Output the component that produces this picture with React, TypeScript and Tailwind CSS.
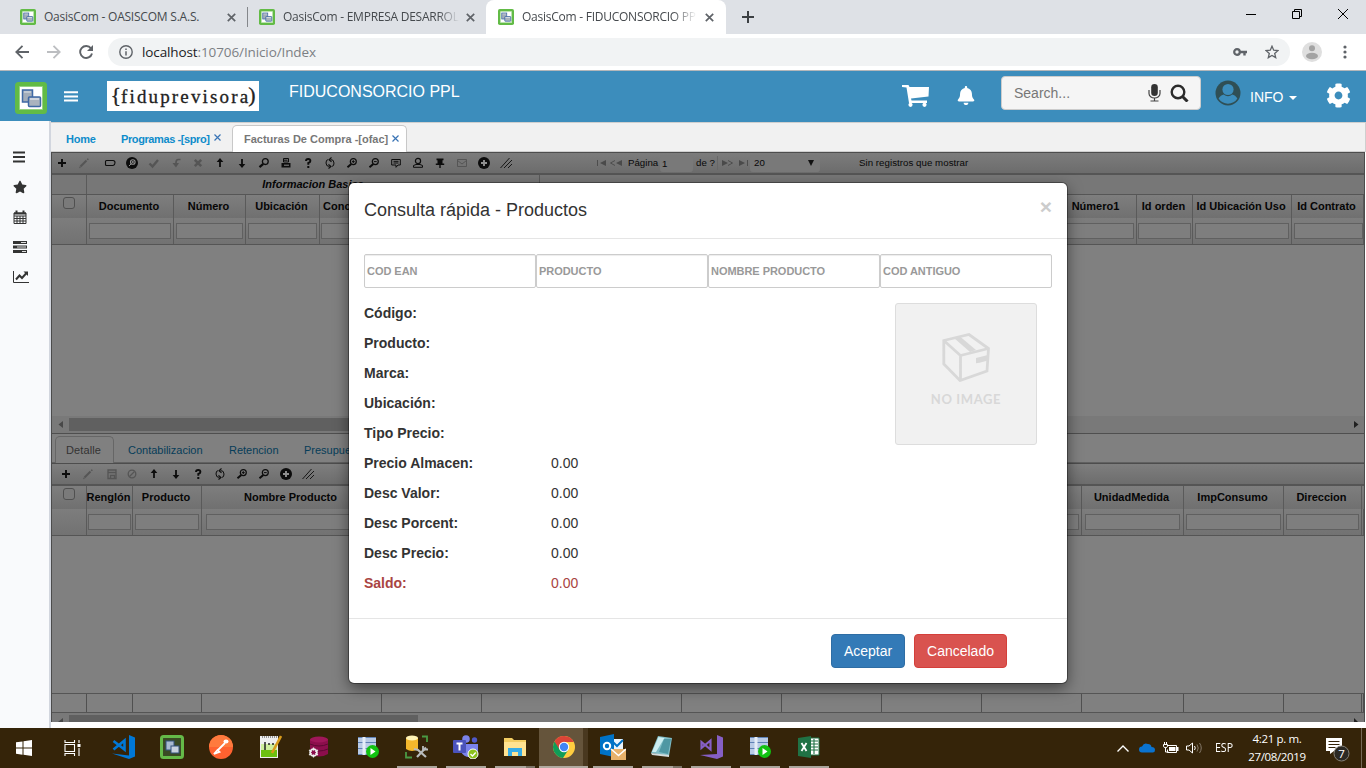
import React from "react";
import { FaBell, FaCog, FaStar } from "react-icons/fa";

type Kids = { children?: React.ReactNode };

function Pic({ w, h, vb, className = "", children }: Kids & { w: number; h: number; vb?: string; className?: string }) {
  return (
    <svg width={w} height={h} viewBox={vb ?? `0 0 ${w} ${h}`} className={`block shrink-0 ${className}`} fill="none">
      {children}
    </svg>
  );
}

/* ---------- shared drawings ---------- */

function OasisLogo({ size }: { size: number }) {
  return (
    <Pic w={size} h={size} vb="0 0 32 32">
      <rect x="0" y="0" width="32" height="32" rx="3.5" fill="#62bb46" />
      <rect x="4.500" y="4.500" width="23" height="23" fill="#fff" stroke="#8fd07c" strokeWidth="0.8" />
      <rect x="7.500" y="8" width="10" height="12" fill="#a3adba" stroke="#3f68a5" strokeWidth="1.500" />
      <path d="M9 10h7" stroke="#dfe4ea" />
      <rect x="13.500" y="15" width="12" height="9.500" rx="1" fill="#aab3be" stroke="#3f68a5" strokeWidth="1.500" />
      <path d="M15 17h9" stroke="#dce1e8" strokeWidth="1.500" />
    </Pic>
  );
}

function CloseX({ color = "#5f6368" }: { color?: string }) {
  return (
    <Pic w={9} h={9} vb="0 0 9 9">
      <path d="M0.800 0.800l7.400 7.400M8.200 0.800L0.800 8.200" stroke={color} strokeWidth="1.700" />
    </Pic>
  );
}

/* ---------- browser window ---------- */

function TabStrip() {
  return (
    <div className="flex h-[34px] items-end bg-[#dee1e6] text-[12px] text-[#45494d]">
      <div className="flex h-[34px] w-[247px] items-center pl-[20px]">
        <OasisLogo size={16} />
        <span className="ml-[8px] w-[172px] whitespace-nowrap font-['Open_Sans',sans-serif] tracking-[-0.220px]">OasisCom - OASISCOM S.A.S.</span>
        <div className="ml-[11px]"><CloseX /></div>
      </div>
      <div className="mb-[7px] h-[20px] w-px bg-[#84878b]" />
      <div className="flex h-[34px] w-[238px] items-center pl-[11px]">
        <OasisLogo size={16} />
        <span className="ml-[8px] w-[176px] overflow-hidden whitespace-nowrap font-['Open_Sans',sans-serif] tracking-[-0.250px] [mask-image:linear-gradient(to_right,black_88%,transparent)]">OasisCom - EMPRESA DESARROLLO</span>
        <div className="ml-[7px]"><CloseX /></div>
      </div>
      <div className="flex h-[34px] w-[240px] items-center rounded-t-[8px] bg-white pl-[12px]">
        <OasisLogo size={16} />
        <span className="ml-[8px] w-[175px] overflow-hidden whitespace-nowrap font-['Open_Sans',sans-serif] tracking-[-0.250px] [mask-image:linear-gradient(to_right,black_86%,transparent)]">OasisCom - FIDUCONSORCIO PPL</span>
        <div className="ml-[8px]"><CloseX /></div>
      </div>
      <Pic w={12} h={12} className="mb-[11px] ml-[16px]">
        <path d="M6 0v12M0 6h12" stroke="#3c4043" strokeWidth="2" />
      </Pic>
      <Pic w={102} h={12} className="mb-[14px] ml-auto mr-[18px]">
        <path d="M0 6.500h10" stroke="#000" />
        <path d="M46.500 3.500h7v7h-7zM48.500 3.500v-2h7v7h-2" stroke="#000" />
        <path d="M92 1l10 10M102 1L92 11" stroke="#000" />
      </Pic>
    </div>
  );
}

function AddressBar() {
  return (
    <div className="flex h-[37px] items-center border-b border-[#b4b7ba] bg-white">
      <Pic w={14} h={14} className="ml-[15px]">
        <path d="M14 7H1.500M7.500 0.800L1.300 7l6.200 6.200" stroke="#5f6368" strokeWidth="1.800" />
      </Pic>
      <Pic w={14} h={14} className="ml-[18px]">
        <path d="M0 7h12.500M6.500 0.800L12.700 7l-6.200 6.200" stroke="#bcbec1" strokeWidth="1.800" />
      </Pic>
      <Pic w={15} h={14} className="ml-[18px]">
        <path d="M12 3.400A6 6 0 1 0 13 8.500" stroke="#5f6368" strokeWidth="1.900" />
        <path d="M14 0v6H8z" fill="#5f6368" />
      </Pic>
      <div className="ml-[14px] flex h-[28px] w-[1182px] items-center rounded-full bg-[#f1f3f4] pl-[11px]">
        <Pic w={14} h={14}>
          <circle cx="7" cy="7" r="6.200" stroke="#5f6368" strokeWidth="1.400" />
          <path d="M7 6.200v4.200M7 3.400v1.500" stroke="#5f6368" strokeWidth="1.500" />
        </Pic>
        <span className="ml-[9px] whitespace-nowrap font-['Open_Sans',sans-serif] text-[13.500px] tracking-[-0.110px] text-[#7c8084]">
          <span className="text-[#202124]">localhost</span>:10706/Inicio/Index
        </span>
        <Pic w={14} h={8} className="ml-auto mr-[18px]">
          <circle cx="4" cy="4" r="2.800" stroke="#5f6368" strokeWidth="2.200" />
          <path d="M6 4h8M11.500 4v3.500" stroke="#5f6368" strokeWidth="2.400" />
        </Pic>
        <Pic w={14} h={14} vb="0 0 14 14" className="mr-[11px]">
          <path d="M7 1.200l1.700 4 4.300.4-3.300 2.800 1 4.200L7 10.400l-3.700 2.200 1-4.200L1 5.600l4.300-.4z" stroke="#5f6368" strokeWidth="1.300" />
        </Pic>
      </div>
      <Pic w={20} h={20} className="ml-[12px]">
        <circle cx="10" cy="10" r="10" fill="#dfdfdf" />
        <circle cx="10" cy="6.300" r="3" fill="#a3a3a3" />
        <ellipse cx="10" cy="14" rx="6" ry="3.300" fill="#a3a3a3" />
      </Pic>
      <Pic w={4} h={14} className="ml-[21px]">
        <circle cx="2" cy="2" r="1.600" fill="#5f6368" />
        <circle cx="2" cy="7" r="1.600" fill="#5f6368" />
        <circle cx="2" cy="12" r="1.600" fill="#5f6368" />
      </Pic>
    </div>
  );
}

/* ---------- application header ---------- */

function AppHeader() {
  return (
    <header className="flex h-[50px] items-start bg-[#3c8dbc] text-white">
      <div className="ml-[15px] mt-[11px]"><OasisLogo size={32} /></div>
      <Pic w={14} h={11} className="ml-[17px] mt-[20px]">
        <path d="M0 1.200h14M0 5.400h14M0 9.600h14" stroke="#fff" strokeWidth="2" />
      </Pic>
      <div className="ml-[29px] mt-[10px] flex h-[30px] w-[152px] items-center justify-center whitespace-nowrap bg-white font-['Liberation_Serif',serif] text-[19px] leading-none tracking-[2.150px] text-[#222] [-webkit-text-stroke:0.300px_#222]">
        <span className="-mt-[2px] text-[22px] tracking-normal">{"{"}</span>fiduprevisora<span className="-ml-[2px] -mt-[2px] text-[22px] tracking-normal">)</span>
      </div>
      <h1 className="ml-[30px] mt-[11px] w-[613px] text-[16px] leading-[20px]">FIDUCONSORCIO PPL</h1>
      <Pic w={27} h={22} className="mt-[14px]">
        <path d="M0 0h6.500l1 2H27l-.500 9.500-17.500 2 .5 2H25v2.500H7L4.500 2.500 0 2z" fill="#fff" />
        <circle cx="8.500" cy="19.800" r="2.100" fill="#fff" />
        <circle cx="22.500" cy="19.800" r="2.100" fill="#fff" />
      </Pic>
      <FaBell className="ml-[28px] mt-[15px] h-[19px] w-[18px] shrink-0" />
      <div className="ml-[26px] mt-[5px] flex h-[34px] w-[200px] shrink-0 items-center rounded-[4px] border border-[#ccc] bg-[#f5f5f5] pl-[12px] text-[14px] text-[#777]">
        Search...
        <Pic w={13} h={18} className="ml-auto">
          <rect x="3.200" y="0" width="6.600" height="12" rx="3.300" fill="#333" />
          <path d="M1 6v3.500a5.500 4.500 0 0 0 11 0V6M6.500 14v3M2.500 17h8" stroke="#444" strokeWidth="1.200" />
        </Pic>
        <Pic w={19} h={18} className="ml-[9px] mr-[11px]">
          <circle cx="8" cy="8" r="6.300" stroke="#2b2b2b" strokeWidth="2.400" />
          <path d="M12.500 12.500l5 5" stroke="#2b2b2b" strokeWidth="3" />
        </Pic>
      </div>
      <Pic w={26} h={26} vb="0 0 26 26" className="ml-[14px] mt-[9px]">
        <circle cx="13" cy="13" r="12.500" fill="#2f4f55" />
        <circle cx="13" cy="9.500" r="5.600" fill="#3c8dbc" />
        <path d="M3.600 18.500c1.500-2.500 3-3.500 5.400-4 2 2.200 6 2.200 8 0 2.400.5 3.900 1.500 5.400 4a11 11 0 0 1-18.800 0z" fill="#3c8dbc" />
      </Pic>
      <span className="ml-[9px] mt-[16px] text-[14px] leading-[20px]">INFO</span>
      <Pic w={8} h={4} className="ml-[6px] mt-[25px]"><path d="M0 0h8L4 4z" fill="#fff" /></Pic>
      <FaCog className="ml-[29px] mt-[12px] h-[25px] w-[25px] shrink-0" />
    </header>
  );
}

function Sidebar() {
  return (
    <nav className="flex w-[51px] shrink-0 flex-col gap-[16px] border-r-2 border-[#d2d6de] bg-[#f9fafc] pl-[13px] pt-[29px]">
      <Pic w={16} h={14}><path d="M0 2.500h12M0 7h12M0 11.500h12" stroke="#333" strokeWidth="2" /></Pic>
      <FaStar className="h-[14px] w-[14px] text-[#333]" />
      <Pic w={14} h={14}>
        <path d="M1 3h12v10.500H1zM1 6h12M1 8.500h12M1 11h12M4 6v7.500M7 6v7.500M10 6v7.500" stroke="#333" />
        <path d="M1 3.500h12M3.500 0.500v3M10.500 0.500v3" stroke="#333" strokeWidth="2" />
      </Pic>
      <Pic w={14} h={14}>
        <path d="M0 2.500h14M0 7h14M0 11.500h14" stroke="#333" strokeWidth="3.200" />
        <path d="M8 2.500h5M4 7h9M9 11.500h4" stroke="#ddd" strokeWidth="1" />
      </Pic>
      <Pic w={16} h={14}>
        <path d="M0.500 1v11.500H16" stroke="#333" />
        <path d="M3 9.500l3.500-4 2.500 2.500L13.500 3" stroke="#333" strokeWidth="2" />
        <path d="M10.500 1.500H15V6z" fill="#333" />
      </Pic>
    </nav>
  );
}

function TabX() {
  return (
    <Pic w={7} h={7} className="-mt-[2px] ml-[4px]">
      <path d="M0.500 0.500l6 6M6.500 0.500l-6 6" stroke="#3a74b5" strokeWidth="1.200" />
    </Pic>
  );
}

function PageTabs() {
  return (
    <div className="flex h-[30px] items-end border-b border-r border-t border-[#cfcfcf] bg-[#f1f1f1] text-[11px] font-bold text-[#0e8ccb]">
      <span className="ml-[15px] w-[55px] leading-[24px] tracking-[-0.200px]">Home</span>
      <span className="flex h-[25px] w-[111px] items-center whitespace-nowrap leading-[24px] tracking-[-0.400px]">Programas -[spro]<TabX /></span>
      <span className="-mb-px flex h-[27px] w-[175px] items-center whitespace-nowrap rounded-t-[5px] border border-b-0 border-[#c8c8c8] bg-white pl-[11px] text-[#777]">
        Facturas De Compra -[ofac]<TabX />
      </span>
    </div>
  );
}

/* ---------- grid toolbars ---------- */

const INK = "#0c0c0c";
const OFF = "#555";

const glyphs: Record<string, React.ReactNode> = {
  plus: <path d="M6 2v8M2 6h8" stroke={INK} strokeWidth="1.900" />,
  pencil: <><path d="M2.500 9.500l6-6" stroke={OFF} strokeWidth="2" /><path d="M9.300 2.700l1-1M1.400 10.600l1-.5" stroke={OFF} strokeWidth="1.600" /></>,
  label: <path d="M2.500 3.500h6.500q2 0 2 2.200T9 8.500H2.500q-1 0-1-1v-3q0-1 1-1z" stroke={INK} strokeWidth="1.100" />,
  searchDot: <><circle cx="6" cy="6" r="6" fill={INK} /><circle cx="6.800" cy="5" r="2.300" stroke="#909090" strokeWidth="1.100" /><path d="M5.300 6.700L3 9M6.800 4v2M5.800 5h2" stroke="#909090" /></>,
  check: <path d="M1.500 6.500l3 3L10 3" stroke={OFF} strokeWidth="2.400" />,
  undo: <><path d="M10.500 2.500H8.500Q6 2.700 6 5.500V7" stroke={OFF} strokeWidth="1.700" /><path d="M2.500 6h6.500L6 10.500z" fill={OFF} /></>,
  cross: <path d="M2.800 2.800l6.400 6.400M9.200 2.800L2.800 9.200" stroke={OFF} strokeWidth="2.600" />,
  up: <><path d="M6 10V3" stroke={INK} strokeWidth="1.800" /><path d="M6 1L2.700 5h6.600z" fill={INK} /></>,
  down: <><path d="M6 2v7" stroke={INK} strokeWidth="1.800" /><path d="M6 11L2.700 7h6.600z" fill={INK} /></>,
  search: <><circle cx="7.300" cy="4.600" r="2.900" stroke={INK} strokeWidth="1.300" /><path d="M5.300 6.900L1.500 10.200" stroke={INK} strokeWidth="2.200" /></>,
  zoomIn: <><circle cx="7.300" cy="4.600" r="3" stroke={INK} strokeWidth="1.200" /><path d="M5.300 6.900L1.500 10.200" stroke={INK} strokeWidth="2" /><path d="M7.300 3.200V6M5.900 4.600h2.800" stroke={INK} /></>,
  zoomOut: <><circle cx="7.300" cy="4.600" r="3" stroke={INK} strokeWidth="1.200" /><path d="M5.300 6.900L1.500 10.200" stroke={INK} strokeWidth="2" /><path d="M5.900 4.600h2.800" stroke={INK} /></>,
  print: <><path d="M3.500 1.500h5v3.500h-5zM3.500 3.200h4" stroke={INK} /><path d="M1.500 6h9v4.500h-9z" fill={INK} /><path d="M4 8.200h5" stroke="#888" /></>,
  help: <><path d="M4 4q0-2 2.200-2T8.400 4Q8.400 5.200 6.300 6v1.800" stroke={INK} strokeWidth="1.900" /><path d="M5.300 9h2v2h-2z" fill={INK} /></>,
  refresh: <><path d="M6.500 2.500q3.500 0 3.500 3.500T8 9.300M5.500 9.500Q2 9.500 2 6t2-3.300" stroke={INK} strokeWidth="1" /><path d="M7.500 0.500L5 2.700l2.500 2M4.500 7.300L7 9.500l-2.500 2" stroke={INK} strokeWidth="1.100" /></>,
  comment: <path d="M1.700 2.500h8.600v5.500H8L6 10.300V8H1.700zM3.500 4.300h5M3.500 6h5" stroke={INK} />,
  person: <><circle cx="6" cy="4" r="2.600" stroke={INK} strokeWidth="1.200" /><path d="M1.500 10.300V8.500L4 7.500h4l2.500 1v1.800z" stroke={INK} strokeWidth="1" /></>,
  pin: <path d="M2.500 1.500h7v1.700H8.500V6.500h1.700V8H6.700v3H5.300V8H1.800V6.500h1.700V3.200h-1z" fill={INK} />,
  mail: <path d="M1.500 2.500h9v7h-9zM1.500 3.500L6 7l4.500-3.500" stroke={OFF} />,
  plusDot: <><circle cx="6" cy="6" r="6" fill={INK} /><path d="M6 3v6M3 6h6" stroke="#909090" strokeWidth="1.900" /></>,
  hatch: <path d="M0.500 11L9.500 1M4 11l8-8M8 11l4-4" stroke={INK} strokeWidth="0.900" />,
  save: <><path d="M2 2h8v8.500H2z" stroke={OFF} strokeWidth="1.300" /><path d="M2 4.500h8M4.500 10V7.500h4V10" stroke={OFF} strokeWidth="1.300" /></>,
  ban: <><circle cx="6" cy="6" r="3.800" stroke={OFF} strokeWidth="1.300" /><path d="M3.500 8.500l5-5" stroke={OFF} strokeWidth="1.300" /></>,
};

function Tool({ name }: { name: string }) {
  return (
    <span className="flex w-[22px] shrink-0 items-center justify-center">
      <Pic w={12} h={12}>{glyphs[name]}</Pic>
    </span>
  );
}

function MainToolbar() {
  const rest = ["label", "searchDot", "check", "undo", "cross", "up", "down", "search", "print", "help", "refresh", "zoomIn", "zoomOut", "comment", "person", "pin", "mail", "plusDot", "hatch"];
  return (
    <div className="flex h-[23px] items-center border-b-2 border-t border-b-[#555] border-t-[#4d4d4d] bg-linear-to-b from-[#7c7c7c] to-[#6c6c6c] text-[9.700px] text-[#080808]">
      <div className="-ml-px flex">
        <Tool name="plus" />
        <Tool name="pencil" />
      </div>
      <div className="w-[4px]" />
      {rest.map((n) => <Tool key={n} name={n} />)}
      <Pic w={26} h={8} className="ml-[80px]">
        <path d="M0.500 1v6M18 1.500L13.500 4 18 6.500" stroke="#484848" strokeWidth="0.900" />
        <path d="M9 1v6L3 4zM25 1v6l-6-3z" fill="#4a4a4a" />
      </Pic>
      <span className="ml-[5px] w-[32px]">Página</span>
      <span className="h-[17px] w-[33px] rounded-[3px] bg-[#797979] pl-[2px] leading-[17px]">1</span>
      <span className="ml-[3px] w-[22px] whitespace-nowrap border-r border-[#686868]">de ?</span>
      <Pic w={28} h={8} className="ml-[3px]">
        <path d="M7 1.500L11.500 4 7 6.500M26.500 1v6" stroke="#484848" strokeWidth="0.900" />
        <path d="M1 1v6l6-3zM18 1v6l6-3z" fill="#4a4a4a" />
      </Pic>
      <span className="ml-[1px] flex h-[17px] w-[70px] items-center justify-between rounded-[3px] bg-[#797979] pl-[4px] pr-[6px]">
        20
        <Pic w={6} h={6}><path d="M0 0h6L3 6z" fill="#111" /></Pic>
      </span>
      <span className="ml-[39px] whitespace-nowrap tracking-[0.040px]">Sin registros que mostrar</span>
    </div>
  );
}

function DetailToolbar() {
  const rest = ["ban", "up", "down", "help", "refresh", "zoomIn", "zoomOut", "plusDot", "hatch"];
  return (
    <div className="flex h-[23px] items-center border-b-2 border-t border-b-[#555] border-t-[#4d4d4d] bg-linear-to-b from-[#7e7e7e] to-[#6d6d6d] pl-[3px]">
      <Tool name="plus" />
      <Tool name="pencil" />
      <div className="ml-[2px] mr-[-2px] flex"><Tool name="save" /></div>
      {rest.map((n) => <Tool key={n} name={n} />)}
    </div>
  );
}

/* ---------- grids ---------- */

type Col = { w: number; label?: string; l?: number; r?: number; check?: boolean; start?: boolean };

const mainCols: Col[] = [
  { w: 35, check: true },
  { w: 87, label: "Documento", l: 2, r: 2 },
  { w: 72, label: "Número", l: 2, r: 2 },
  { w: 74, label: "Ubicación", l: 2, r: 2 },
  { w: 74, label: "Concepto", l: 1, r: 2, start: true },
  { w: 663, l: 2, r: 2 },
  { w: 80, label: "Número1", l: 2, r: 2 },
  { w: 56, label: "Id orden", l: 1, r: 1 },
  { w: 99, label: "Id Ubicación Uso", l: 2, r: 2 },
  { w: 72, label: "Id Contrato", l: 2, r: 0 },
];

const detailCols: Col[] = [
  { w: 35, check: true },
  { w: 46, label: "Renglón", l: 1, r: 1 },
  { w: 69, label: "Producto", l: 2, r: 2 },
  { w: 180, label: "Nombre Producto", l: 4, r: 4 },
  { w: 700, l: 2, r: 2 },
  { w: 102, label: "UnidadMedida", l: 3, r: 3 },
  { w: 100, label: "ImpConsumo", l: 2, r: 2 },
  { w: 78, label: "Direccion", l: 2, r: 2 },
  { w: 2 },
];

function GridHead({ cols }: { cols: Col[] }) {
  return (
    <div className="flex h-[50px] shrink-0 border-b border-[#555]">
      {cols.map((c, i) => (
        <div key={i} style={{ width: c.w }} className="flex shrink-0 flex-col border-r border-[#5a5a5a] text-[11px] font-bold text-[#060606]">
          <div className={c.start ? "flex h-[23px] items-center overflow-hidden whitespace-nowrap bg-linear-to-b from-[#7e7e7e] to-[#707070] pl-[3px]" : "flex h-[23px] items-center justify-center overflow-hidden whitespace-nowrap bg-linear-to-b from-[#7e7e7e] to-[#707070] pr-[2px]"}>
            {c.check ? <span className="mb-[7px] ml-px h-[12px] w-[12px] rounded-[3px] border border-[#505050] bg-[#7a7a7a]" /> : c.label}
          </div>
          <div className="flex h-[26px] items-center bg-linear-to-b from-[#7d7d7d] to-[#727272]" style={{ paddingLeft: c.l, paddingRight: c.r }}>
            {c.l ? <span className="h-[16px] w-full border border-[#606060] bg-[#7e7e7e]" /> : null}
          </div>
        </div>
      ))}
    </div>
  );
}

function MainGrid() {
  return (
    <section className="flex flex-col">
      <MainToolbar />
      <div className="flex h-[20px] border-b border-[#565656] bg-[#777] text-[11px] font-bold italic text-[#060606]">
        <div className="w-[35px] border-r border-[#5a5a5a]" />
        <div className="w-[453px] border-r border-[#5a5a5a] text-center leading-[19px]">Informacion Basica</div>
      </div>
      <GridHead cols={mainCols} />
      <div className="h-[171px]" />
      <div className="flex h-[18px] items-center border-b border-[#4f4f4f] bg-[#797979]">
        <Pic w={5} h={7} className="ml-[6px]"><path d="M5 0v7L0.500 3.500z" fill="#484848" /></Pic>
        <div className="ml-[6px] h-[13px] w-[700px] bg-[#606060]" />
        <Pic w={5} h={7} className="ml-auto mr-[5px]"><path d="M0 0v7l4.500-3.500z" fill="#202020" /></Pic>
      </div>
    </section>
  );
}

function DetailGrid() {
  const foot = [35, 46, 69, 180, 100, 100, 100, 100, 100, 100, 100, 102, 100, 78, 2];
  return (
    <section className="flex flex-1 flex-col">
      <div className="flex h-[29px] items-end border-b border-[#616161] text-[11px] text-[#063d59]">
        <span className="-mb-px ml-[3px] mr-[14px] h-[27px] w-[59px] rounded-t-[5px] border border-b-0 border-[#666] bg-[#808080] pl-[10px] leading-[27px] tracking-[0.100px] text-[#333]">Detalle</span>
        <span className="w-[101px] leading-[23px]">Contabilizacion</span>
        <span className="w-[75px] leading-[23px]">Retencion</span>
        <span className="leading-[23px]">Presupuesto</span>
      </div>
      <DetailToolbar />
      <GridHead cols={detailCols} />
      <div className="h-[157px]" />
      <div className="flex h-[20px] border-y border-[#555]">
        {foot.map((w, i) => <div key={i} style={{ width: w }} className="shrink-0 border-r border-[#505050]" />)}
      </div>
      <div className="flex h-[9px] items-end overflow-hidden bg-[#797979]">
        <Pic w={5} h={4} className="ml-[6px]"><path d="M5 0v4H0z" fill="#484848" /></Pic>
        <div className="ml-[6px] h-[7px] w-[349px] bg-[#606060]" />
        <Pic w={5} h={4} className="ml-auto mr-[5px]"><path d="M0 0v4h4z" fill="#202020" /></Pic>
      </div>
    </section>
  );
}

/* ---------- modal ---------- */

const facts: [string, string?][] = [
  ["Código:"], ["Producto:"], ["Marca:"], ["Ubicación:"], ["Tipo Precio:"],
  ["Precio Almacen:", "0.00"], ["Desc Valor:", "0.00"], ["Desc Porcent:", "0.00"], ["Desc Precio:", "0.00"],
];

function ProductDialog() {
  return (
    <div className="absolute left-[349px] top-[183px] flex h-[500px] w-[718px] flex-col rounded-[5px] bg-white text-[14px] text-[#333] shadow-[0_0_0_1px_rgba(0,0,0,0.35),0_5px_15px_rgba(0,0,0,0.5)]">
      <div className="flex h-[56px] shrink-0 justify-between border-b border-[#e5e5e5] pl-[15px] pr-[15px] pt-[15px]">
        <h2 className="text-[18px] leading-[24px]">Consulta rápida - Productos</h2>
        <span className="text-[21px] font-bold leading-[18px] text-[#ccc]">×</span>
      </div>
      <div className="flex px-[15px] pt-[15px] text-[11px] font-bold text-[#999]">
        {["COD EAN", "PRODUCTO", "NOMBRE PRODUCTO", "COD ANTIGUO"].map((t) => (
          <div key={t} className="h-[34px] w-[172px] rounded-[2px] border border-[#ccc] pl-[2px] leading-[33px] tracking-[-0.040px] shadow-[inset_0_1px_1px_rgba(0,0,0,0.075)]">{t}</div>
        ))}
      </div>
      <div className="flex flex-1 justify-between pl-[15px] pr-[30px] pt-[10px]">
        <dl>
          {facts.map(([k, v]) => (
            <div key={k} className="flex h-[30px] leading-[30px]">
              <dt className="w-[187px] font-bold">{k}</dt>
              <dd>{v}</dd>
            </div>
          ))}
          <div className="flex h-[30px] leading-[30px] text-[#a94442]">
            <dt className="w-[187px] font-bold">Saldo:</dt>
            <dd>0.00</dd>
          </div>
        </dl>
        <div className="mt-[5px] flex h-[142px] w-[142px] flex-col items-center rounded-[3px] border border-[#ddd] bg-[#f1f1f1]">
          <Pic w={48} h={49} className="mt-[29px]">
            <path d="M1.800 7.500L27 1.500l19.500 14-1.500 22.500-27 9.500L1.800 31zM1.800 7.500L18.500 22.500v25M18.500 22.500l28-7" stroke="#d8d8d8" strokeWidth="2.800" />
            <path d="M12 5l6-1.500L34 17l-6 2z" fill="#d8d8d8" />
            <path d="M34 25l12-3v5.500l-8.500 2.200-3.500.500z" fill="#d8d8d8" />
          </Pic>
          <span className="mt-[8px] whitespace-nowrap font-['Lato',sans-serif] text-[13px] font-bold leading-[18px] tracking-[0.600px] text-[#d8d8d8]">NO IMAGE</span>
        </div>
      </div>
      <div className="flex h-[65px] shrink-0 gap-[9px] border-t border-[#e5e5e5] pl-[482px] pt-[15px] text-white">
        <button className="h-[34px] w-[74px] rounded-[4px] border border-[#2e6da4] bg-[#337ab7]">Aceptar</button>
        <button className="h-[34px] w-[93px] rounded-[4px] border border-[#d43f3a] bg-[#d9534f]">Cancelado</button>
      </div>
    </div>
  );
}

/* ---------- taskbar ---------- */

const serverIcon = (
  <Pic w={22} h={22}>
    <path d="M1 1h18v18H1z" fill="#b9cbe6" />
    <path d="M1 1.500h18M1 6.500h18M1 12.500h18M1 18.500h18" stroke="#5f82b5" />
    <path d="M7 1v18" stroke="#e5edf8" strokeWidth="3" />
    <circle cx="15.500" cy="15.500" r="6.500" fill="#12c212" />
    <path d="M13.500 12l5 3.500-5 3.500z" fill="#fff" />
  </Pic>
);

type App = { icon: React.ReactNode; line?: "solid" | "stack" | "active" };

const apps: App[] = [
  { icon: <Pic w={24} h={24}><path d="M18 0l6 2.500v19L18 24 1 18.500l17 2z" fill="#0078d7" /><path d="M2.500 6l11 8.500V5.500l-11 9" stroke="#0078d7" strokeWidth="2.600" /></Pic> },
  { icon: <Pic w={24} h={24}><rect x="1.500" y="1.500" width="21" height="21" rx="2" stroke="#65b948" strokeWidth="3" fill="#3a4a24" /><rect x="6" y="6" width="8" height="9" fill="#a9bad0" stroke="#33527e" /><rect x="11" y="11" width="8" height="7" fill="#c7d1de" stroke="#33527e" /></Pic> },
  { icon: <Pic w={24} h={24}><circle cx="12" cy="12" r="12" fill="#ff6230" /><path d="M0 12a12 12 0 0 1 24 0" fill="#ff7a3d" /><path d="M5 19l3.500-4 2 2zM9 15l7-7" stroke="#fff" strokeWidth="1.800" /><ellipse cx="17" cy="6.500" rx="2.500" ry="2.100" fill="#fff" /></Pic> },
  { icon: <Pic w={24} h={24}><path d="M2 1h18v22H2z" fill="#eee" /><path d="M3 14h16v8H3z" fill="#6cc010" /><path d="M3 9h16v6H3z" fill="#cfee9d" /><path d="M4 2h15" stroke="#777" strokeWidth="1.500" strokeDasharray="1 1" /><path d="M7 7v8M10 9h2M14 9h2" stroke="#222" strokeWidth="1.500" /><path d="M23 1l-9 17" stroke="#d99b1b" strokeWidth="2.600" /></Pic> },
  { icon: <Pic w={22} h={22}><path d="M2 3v15q9 5 18 0V3" fill="#8c0e4c" /><ellipse cx="11" cy="3.500" rx="9" ry="3" fill="#a0175a" /><path d="M2 8q9 4 18 0M2 13q9 4 18 0" stroke="#5d0832" /><circle cx="5.500" cy="16.500" r="3.400" stroke="#eee" strokeWidth="1.800" /><path d="M5.500 11.500v10M1 14l9 5M10 14l-9 5" stroke="#eee" strokeWidth="1.200" /><circle cx="5.500" cy="16.500" r="2" fill="#8c0e4c" /></Pic> },
  { icon: serverIcon },
  { icon: <Pic w={24} h={24}><path d="M1 3v11q6 4 12 0V3" fill="#f3b72c" /><ellipse cx="7" cy="3" rx="6" ry="2.500" fill="#fff3b5" /><path d="M17 1.500h5V7M1 17v5.500h6" stroke="#4a9a44" strokeWidth="1.800" /><path d="M9 14l4 1 8 7M21 12.500L12 22" stroke="#b9bcbd" strokeWidth="2.200" /><path d="M18 11v3.500h5" stroke="#b9bcbd" strokeWidth="1.800" /></Pic>, line: "solid" },
  { icon: <Pic w={26} h={24}><circle cx="13" cy="4" r="3.800" fill="#7b83eb" /><circle cx="21.500" cy="5" r="2.700" fill="#5059c9" /><path d="M8 9h17v7q-4 6-9 6t-8-5z" fill="#7b83eb" /><rect x="0" y="5" width="13" height="13" rx="1" fill="#4b53bc" /><path d="M3.500 8.500h6M6.500 8.500v7" stroke="#fff" strokeWidth="2" /><circle cx="20" cy="19" r="5" fill="#8cc01b" stroke="#fff" /><path d="M17.500 19l2 2 3.200-3.500" stroke="#fff" strokeWidth="1.300" /></Pic>, line: "solid" },
  { icon: <Pic w={22} h={20}><path d="M0 1h8l2 2h12v16H0z" fill="#f3cd62" /><path d="M0 5h22v14H0z" fill="#ffe391" /><path d="M4 19v-8h14v8h-4v-4H8v4z" fill="#37ade6" /></Pic>, line: "stack" },
  { icon: <Pic w={24} h={24}><circle cx="12" cy="12" r="11" fill="#ffcd40" /><path d="M12 12L2.500 6.500A11 11 0 0 0 11 23L16.500 14.500z" fill="#0f9d58" /><path d="M12 12L12 7H21.800A11 11 0 0 0 2.500 6.500L7.500 14.500z" fill="#db4437" /><circle cx="12" cy="12" r="5.200" fill="#fff" /><circle cx="12" cy="12" r="4.200" fill="#4285f4" /></Pic>, line: "active" },
  { icon: <Pic w={26} h={26}><path d="M12 5h11v12H12z" fill="#eaf4fc" /><path d="M13 8l4 4 6-6" stroke="#0072c6" strokeWidth="2" /><path d="M0 3l14-3v23L0 20z" fill="#0072c6" /><circle cx="7" cy="12" r="3.200" stroke="#fff" strokeWidth="2" /><path d="M11 15h15v11H11z" fill="#e8b26b" /><path d="M11 15l7.500 6.500L26 15" stroke="#fff" strokeWidth="1.500" /></Pic>, line: "solid" },
  { icon: <Pic w={24} h={24}><path d="M8 1l14 2-3 18L1 18z" fill="#7fbcc6" /><path d="M8.500 2l6 1L6 17l-4 0z" fill="#cdeef1" /><path d="M14 4l7 0-3 15-9-2z" fill="#4f97a3" /><path d="M1 18l18 2v2L2 20z" fill="#d5dcdc" /></Pic>, line: "stack" },
  { icon: <Pic w={24} h={24}><path d="M18 0l6 2.500v19L18 24 1 20l17-1z" fill="#865fc5" /><path d="M2.500 7l9 7.500V5.500L2.500 13z" stroke="#865fc5" strokeWidth="2.200" /></Pic>, line: "solid" },
  { icon: serverIcon, line: "solid" },
  { icon: <Pic w={24} h={24}><path d="M11 3h11v17H11z" fill="#fff" stroke="#207245" /><path d="M13 6h8M13 9h8M13 12h8M13 15h8M17 4v15" stroke="#207245" strokeWidth="1.100" /><path d="M1 3l13-2v22L1 21z" fill="#207245" /><path d="M4.500 8l5 8M9.500 8l-5 8" stroke="#fff" strokeWidth="1.800" /></Pic>, line: "solid" },
];

function Taskbar() {
  return (
    <footer className="flex h-[40px] shrink-0 items-stretch bg-[#352409] text-white">
      <div className="flex w-[48px] items-center justify-center">
        <Pic w={16} h={16}><path d="M0 2.300l6.500-.900v6.200H0zM7.500 1.200L16 0v7.600H7.500zM0 8.500h6.500v6.200L0 13.800zM7.500 8.500H16V16l-8.500-1.200z" fill="#fff" /></Pic>
      </div>
      <div className="flex w-[50px] items-center justify-center pr-[2px]">
        <Pic w={17} h={16}><path d="M1 0v2.500h9.500V0M1 16v-2.500h9.500V16M1 4.500h9.500v7H1zM15 0v3M15 8v8" stroke="#fff" strokeWidth="1.100" /><path d="M13.500 4h3v3h-3z" fill="#fff" /></Pic>
      </div>
      {apps.map((a, i) => (
        <div key={i} className={a.line === "active" ? "flex w-[49px] flex-col bg-linear-to-r from-[#65543b] from-90% to-[#49381f] to-90%" : "flex w-[49px] flex-col"}>
          <div className="flex h-[38px] items-center justify-center pl-px">{a.icon}</div>
          {a.line && (
            <div className="flex h-[2px] justify-center">
              <div className={a.line === "active" ? "w-full bg-[#b0aaa0]" : a.line === "stack" ? "w-[31px] bg-[#aaa59c]" : "w-[40px] bg-[#aaa59c]"} />
              {a.line === "stack" && <div className="w-[9px] bg-[#7d7568]" />}
            </div>
          )}
        </div>
      ))}
      <div className="ml-auto flex items-center font-['Open_Sans',sans-serif] text-[12px]">
        <Pic w={12} h={7}><path d="M0.500 6.500L6 1l5.500 5.500" stroke="#fff" strokeWidth="1.400" /></Pic>
        <Pic w={16} h={10} className="ml-[10px]"><path d="M3 9.500a3 3 0 0 1 0-6Q5-1 9 1q3 0 3.500 3 3.500 0 3.500 3t-3 2.500z" fill="#0a73d0" /></Pic>
        <Pic w={16} h={12} className="ml-[8px]"><path d="M4.500 3.500h9v7h-9v-3" stroke="#fff" /><path d="M6 5h6.500v4H6zM14 5h1.500v4H14z" fill="#fff" /><path d="M0.500 2.500h4v2q0 1-2 1t-2-1zM1.500 0v2.500M3.500 0v2.500M2.500 5.500V10h3" stroke="#fff" /></Pic>
        <Pic w={17} h={12} className="ml-[7px]"><path d="M0.500 4H3l3.500-3v10L3 8H.500z" stroke="#fff" /><path d="M8.500 4q1.500 2 0 4" stroke="#fff" /><path d="M11 2.500q2.500 3.500 0 7M13.500 1q3.500 5 0 10" stroke="#85796a" /></Pic>
        <span className="ml-[12px] w-[19px] origin-left scale-x-[0.880]">ESP</span>
        <div className="ml-[10px] flex w-[66px] flex-col items-center whitespace-nowrap text-[11.500px] leading-[18px] tracking-[-0.350px]">
          <span>4:21 p. m.</span>
          <span>27/08/2019</span>
        </div>
        <Pic w={26} h={26} className="ml-[15px] mr-[10px] mt-[4px]">
          <path d="M1 1h16v13H9l-4 3v-3H1z" fill="#fff" />
          <path d="M3.500 4.500h11M3.500 7.500h11M3.500 10.500h7" stroke="#352409" />
          <circle cx="16.500" cy="16.500" r="7.500" fill="#2b2924" stroke="#858178" />
          <text x="16.500" y="20.700" fill="#fff" fontSize="11.500" textAnchor="middle" fontFamily="Open Sans, sans-serif">7</text>
        </Pic>
        <div className="mr-[4px] h-[40px] w-px bg-[#756a57]" />
      </div>
    </footer>
  );
}

export default function App() {
  return (
    <div className="relative flex h-[768px] w-[1366px] flex-col overflow-hidden bg-white font-['Liberation_Sans',Arial,sans-serif]">
      <TabStrip />
      <AddressBar />
      <AppHeader />
      <div className="flex h-[607px] shrink-0">
        <Sidebar />
        <main className="flex min-w-0 flex-1 flex-col border-t border-[#3c8dbc] bg-white">
          <PageTabs />
          <div className="mr-px flex h-[570px] flex-col border-l border-r border-[#4c4c4c] bg-[#808080]">
            <MainGrid />
            <DetailGrid />
          </div>
        </main>
      </div>
      <Taskbar />
      <ProductDialog />
    </div>
  );
}
